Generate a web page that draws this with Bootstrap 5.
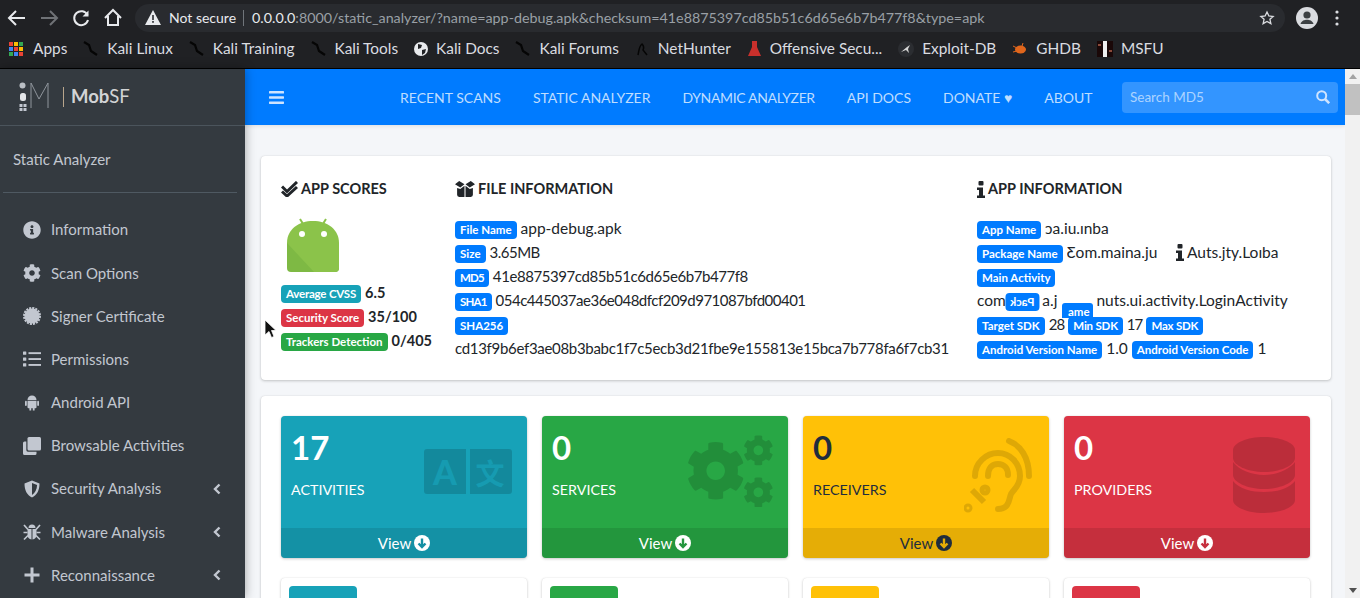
<!DOCTYPE html>
<html lang="en">
  <head>
    <meta charset="UTF-8" />
    <title>MobSF Static Analyzer</title>
    <link href="https://cdn.jsdelivr.net/npm/bootstrap@5.3.2/dist/css/bootstrap.min.css" rel="stylesheet" />
    <style>
      html, body { height: 598px; overflow: hidden; }
      body { font-family: "Lato", "Liberation Sans", sans-serif; font-size: 15px; color: #212529; background: #f4f6f9; }

      /* browser chrome */
      .chrome-bar { height: 35px; background: #202124; color: #e8eaed; padding-left: 5px; }
      .nav-glyph { width: 24px; height: 24px; margin-right: 8px; flex: none; }
      .url-pill { height: 28px; background: #292b2f; border-radius: 14px; margin-left: 2px; width: 1150px; font-size: 14px; color: #9aa0a6; padding: 0 10px; white-space: nowrap; flex: none; }
      .url-pill .addr { font-size: 14.3px; }
      .url-pill b { font-weight: 400; color: #e8eaed; }
      .url-state { color: #e8eaed; }
      .url-sep { width: 1px; height: 16px; background: #70757a; margin: 0 8px 0 7px; }
      .star-ico { margin-left: auto; }
      .avatar-ico { margin-left: 11px; }
      .bookmarks { height: 34px; background: #202124; border-bottom: 1px solid #000; color: #dadce0; font-size: 15.4px; padding: 0 0 5px 9px; gap: 16px; white-space: nowrap; }
      .bookmarks > span { gap: 8px; }
      .apps-word { margin-left: 2px; }

      /* app frame */
      .app-frame { height: 529px; }
      .side-panel { width: 245px; flex: none; background: #343a40; color: #c2c7d0; box-shadow: 0 0 10px rgba(0,0,0,.35); z-index: 2; }
      .brand-row { height: 57px; border-bottom: 1px solid #4b545c; padding-left: 19px; color: rgba(255,255,255,.8); font-size: 18.5px; }
      .brand-sep { width: 1px; height: 20px; background: #b8a58c; margin: 0 7px 0 10px; }
      .side-title { height: 66px; padding-left: 13px; font-size: 15px; }
      .side-rule { height: 1px; background: #4f5962; margin: 0 8px 0 3px; }
      .side-list { padding: 15px 0 0 23px; margin: 0; list-style: none; }
      .side-list li { height: 43.2px; font-size: 15px; padding-right: 24px; }
      .side-list svg.lead-ico { width: 18px; height: 18px; margin-right: 10px; fill: #c2c7d0; flex: none; }

      .work-area { min-width: 0; }
      .top-nav { height: 56px; background: #007bff; padding: 0 7px 0 24px; color: rgba(255,255,255,.75); font-size: 14px; white-space: nowrap; box-shadow: 0 1px 4px rgba(0,0,0,.1); }
      .top-links { gap: 32px; margin-left: 116px; }
      .tight-link { letter-spacing: -.35px; }
      .search-box { width: 216px; height: 31px; background: #3395ff; border-radius: 4px; margin-left: auto; font-size: 13.5px; padding: 0 8px; color: rgba(255,255,255,.6); }

      .scroll-body { padding: 31px 14px 0 16px; overflow: hidden; height: 473px; }
      .scroll-track { width: 15px; flex: none; background: #f1f1f1; position: relative; }
      .scroll-thumb { height: 31px; margin-top: 15px; background: #c1c1c1; }
      .scroll-arrow { width: 0; height: 0; border-left: 4px solid transparent; border-right: 4px solid transparent; position: absolute; left: 4px; }

      .panel-card { background: #fff; border-radius: 4px; box-shadow: 0 0 1px rgba(0,0,0,.125), 0 1px 3px rgba(0,0,0,.2); }
      .info-card { height: 224px; padding: 20px; margin-bottom: 16px; }
      .info-head { font-size: 14.5px; font-weight: 700; height: 26px; margin-bottom: 15px; white-space: nowrap; }
      .info-head svg { width: 17px; height: 16px; margin-right: 3px; fill: #212529; }
      .col-scores { width: 174px; flex: none; }
      .col-file { width: 522px; flex: none; }
      .col-app { position: relative; flex: 1; min-width: 0; }
      .data-line { height: 24px; white-space: nowrap; font-size: 15.5px; line-height: 22px; }
      .mini-tag { font-size: 11.5px; font-weight: 700; padding: 3px 5px; border-radius: 4px; color: #fff; display: inline-block; line-height: 12px; vertical-align: 0; }
      .tag-tight { letter-spacing: -.8px; }
      .tag-snug { letter-spacing: -.2px; }
      .num-tight { font-size: 15px; letter-spacing: -.9px; }
      .size-val { font-size: 15px; letter-spacing: -.5px; }
      .hash-md5 { font-size: 15px; letter-spacing: -.43px; }
      .hash-sha1 { font-size: 15px; letter-spacing: -.5px; }
      .hash-sha256 { font-size: 15px; letter-spacing: -.31px; }
      .tag-blue { background: #007bff; }
      .tag-cyan { background: #17a2b8; }
      .tag-red { background: #dc3545; }
      .tag-green { background: #28a745; }
      .score-val { font-weight: 700; font-size: 14.5px; }
      .droid-logo { width: 52px; height: 56px; margin: 0 0 8px 6px; display: block; }
      .flip-tag { transform: scaleX(-1); margin: 0 3px 0 -1px; }
      .ghost-tag { position: absolute; left: 85px; top: 127px; width: 31px; height: 15px; background: #007bff; color: #fff; font-size: 11.5px; font-weight: 700; border-radius: 3px 3px 0 0; padding: 3px 0 0 6px; line-height: 12px; }
      .clip-text { display: inline-block; width: 92px; overflow: hidden; vertical-align: top; }
      .gap-hole { display: inline-block; width: 39px; }
      .stray-i { width: 8px; height: 17px; margin-left: 17px; vertical-align: -3px; fill: #212529; }

      .tiles-card { padding: 20px 21px 20px 20px; height: 300px; }
      .tile-row { --bs-gutter-x: 15px; --bs-gutter-y: 20px; }
      .stat-tile { height: 142px; border-radius: 4px; position: relative; color: #fff; box-shadow: 0 0 1px rgba(0,0,0,.125), 0 1px 3px rgba(0,0,0,.2); overflow: hidden; }
      .tile-main { height: 112px; padding: 11px 10px; }
      .tile-num { font-size: 33px; font-weight: 700; line-height: 40px; margin: 0 0 11px; }
      .tile-name { font-size: 14.3px; line-height: 24px; }
      .tile-foot { height: 30px; background: rgba(0,0,0,.1); gap: 3px; font-size: 15px; }
      .tile-foot svg { width: 16px; height: 16px; }
      .tile-art { position: absolute; right: 15px; fill: rgba(0,0,0,.15); }
      .fill-cyan { background: #17a2b8; }
      .fill-green { background: #28a745; }
      .fill-amber { background: #ffc107; color: #1f2d3d; }
      .fill-red { background: #dc3545; }
      .small-tile { height: 80px; padding: 8px; }
      .small-square { width: 68px; height: 68px; border-radius: 4px; }
      .mouse-ptr { position: absolute; left: 264px; top: 319px; width: 13px; height: 20px; z-index: 5; }
    </style>
  </head>
  <body>
    <!-- shared icon shapes -->
    <svg width="0" height="0" class="position-absolute">
      <defs>
        <path id="cog-shape" d="M487.4 315.7l-42.6-24.6c4.3-23.2 4.3-47 0-70.2l42.6-24.6c4.9-2.8 7.1-8.6 5.5-14-11.1-35.6-30-67.8-54.7-94.6-3.8-4.1-10-5.1-14.8-2.3L380.8 110c-17.9-15.4-38.5-27.3-60.8-35.1V25.8c0-5.6-3.9-10.5-9.4-11.7-36.7-8.2-74.3-7.8-109.2 0-5.5 1.2-9.4 6.1-9.4 11.7V75c-22.2 7.9-42.8 19.8-60.8 35.1L88.7 85.5c-4.9-2.8-11-1.9-14.8 2.3-24.7 26.7-43.6 58.9-54.7 94.6-1.7 5.4.6 11.2 5.5 14L67.3 221c-4.3 23.2-4.3 47 0 70.2l-42.6 24.6c-4.9 2.8-7.1 8.6-5.5 14 11.1 35.6 30 67.8 54.7 94.6 3.8 4.1 10 5.1 14.8 2.3l42.6-24.6c17.9 15.4 38.5 27.3 60.8 35.1v49.2c0 5.6 3.9 10.5 9.4 11.7 36.7 8.2 74.3 7.8 109.2 0 5.5-1.2 9.4-6.1 9.4-11.7v-49.2c22.2-7.9 42.8-19.8 60.8-35.1l42.6 24.6c4.9 2.8 11 1.9 14.8-2.3 24.7-26.7 43.6-58.9 54.7-94.6 1.5-5.5-.7-11.3-5.6-14.1zM256 336c-44.1 0-80-35.9-80-80s35.9-80 80-80 80 35.9 80 80-35.9 80-80 80z"/>
        <path id="dragon-shape" d="M1 1l5 3 2 6 6 4" fill="none" stroke="#050505" stroke-width="2.200"/>
        <path id="caret-shape" d="M6.500 1.500L2 6l4.500 4.500" fill="none" stroke="#c2c7d0" stroke-width="2.400"/>
        <g id="info-i-shape"><rect x="1.500" width="5" height="4.500" rx="1"/><path d="M0 6.500h6v8h2V17H0v-2.500h2v-5.500H0z"/></g>
        <g id="down-shape"><circle cx="8" cy="8" r="8" fill="currentColor"/></g>
      </defs>
    </svg>

    <!-- browser toolbar -->
    <div class="chrome-bar d-flex align-items-center">
      <svg class="nav-glyph" viewBox="0 0 24 24" fill="none" stroke="#e8eaed" stroke-width="2"><path d="M20 12H5M11 5l-7 7 7 7"/></svg>
      <svg class="nav-glyph" viewBox="0 0 24 24" fill="none" stroke="#6f7276" stroke-width="2"><path d="M4 12h15M13 5l7 7-7 7"/></svg>
      <svg class="nav-glyph" viewBox="0 0 24 24" fill="none" stroke="#e8eaed" stroke-width="2"><path d="M18.500 9A7 7 0 1 0 19 14"/><path d="M19.500 4.500v6h-6" fill="#e8eaed" stroke="none"/></svg>
      <svg class="nav-glyph" viewBox="0 0 24 24" fill="none" stroke="#e8eaed" stroke-width="2"><path d="M4 12l8-8 8 8M7 10v9h10v-9"/></svg>
      <div class="url-pill d-flex align-items-center">
        <svg width="16" height="15" viewBox="0 0 16 15" class="me-2"><path d="M8 0l8 15H0z" fill="#e8eaed"/><rect x="7.200" y="5" width="1.600" height="5" fill="#292b2f"/><rect x="7.200" y="11" width="1.600" height="1.800" fill="#292b2f"/></svg>
        <span class="url-state">Not secure</span><span class="url-sep"></span>
        <span class="addr"><b>0.0.0.0</b>:8000/static_analyzer/?name=app-debug.apk&amp;checksum=41e8875397cd85b51c6d65e6b7b477f8&amp;type=apk</span>
        <svg class="star-ico" width="16" height="16" viewBox="0 0 24 24" fill="none" stroke="#dadce0" stroke-width="2"><path d="M12 3l2.800 6 6.400.7-4.800 4.300 1.400 6.400L12 17.100l-5.800 3.300 1.400-6.400L2.800 9.700 9.200 9z"/></svg>
      </div>
      <svg class="avatar-ico" width="22" height="22" viewBox="0 0 22 22"><circle cx="11" cy="11" r="11" fill="#dadce0"/><circle cx="11" cy="8" r="3.600" fill="#3c4043"/><path d="M4.500 17c1-3.500 4-4.300 6.500-4.300s5.500.8 6.500 4.300z" fill="#3c4043"/></svg>
      <svg class="ms-3" width="6" height="16" viewBox="0 0 6 16" fill="#dadce0"><circle cx="3" cy="2" r="1.600"/><circle cx="3" cy="8" r="1.600"/><circle cx="3" cy="14" r="1.600"/></svg>
    </div>

    <!-- bookmarks bar -->
    <div class="bookmarks d-flex align-items-center">
      <span class="d-flex align-items-center">
        <svg width="14" height="14" viewBox="0 0 14 14"><rect width="4" height="4" fill="#ea4335"/><rect x="5" width="4" height="4" fill="#fbbc04"/><rect x="10" width="4" height="4" fill="#34a853"/><rect y="5" width="4" height="4" fill="#4285f4"/><rect x="5" y="5" width="4" height="4" fill="#ea4335"/><rect x="10" y="5" width="4" height="4" fill="#fbbc04"/><rect y="10" width="4" height="4" fill="#34a853"/><rect x="5" y="10" width="4" height="4" fill="#4285f4"/><rect x="10" y="10" width="4" height="4" fill="#ea4335"/></svg>
        <span class="apps-word">Apps</span></span>
      <span class="d-flex align-items-center"><svg width="16" height="16" viewBox="0 0 16 16"><use href="#dragon-shape"/></svg>Kali Linux</span>
      <span class="d-flex align-items-center"><svg width="16" height="16" viewBox="0 0 16 16"><use href="#dragon-shape"/></svg>Kali Training</span>
      <span class="d-flex align-items-center"><svg width="16" height="16" viewBox="0 0 16 16"><use href="#dragon-shape"/></svg>Kali Tools</span>
      <span class="d-flex align-items-center"><svg width="14" height="14" viewBox="0 0 14 14"><circle cx="7" cy="7" r="7" fill="#e8eaed"/><path d="M4 2l4 1-1 3-3 1zM8 8l4-1-1 4-3 2z" fill="#202124"/></svg>Kali Docs</span>
      <span class="d-flex align-items-center"><svg width="16" height="16" viewBox="0 0 16 16"><use href="#dragon-shape"/></svg>Kali Forums</span>
      <span class="d-flex align-items-center"><svg width="15" height="15" viewBox="0 0 15 15" fill="none" stroke="#050505" stroke-width="1.500"><path d="M3 14c1-4 1-9 4-11 2 2 2 4 1 6l4 5"/></svg>NetHunter</span>
      <span class="d-flex align-items-center"><svg width="15" height="16" viewBox="0 0 15 16"><path d="M5 0h5v6l4 9H1l4-9z" fill="#c9302c"/></svg>Offensive Secu...</span>
      <span class="d-flex align-items-center"><svg width="16" height="16" viewBox="0 0 16 16"><circle cx="8" cy="8" r="8" fill="#2b2d31"/><path d="M3 11l6-5 3-2-2 4 1 4-3-3z" fill="#d5d5d5"/></svg>Exploit-DB</span>
      <span class="d-flex align-items-center"><svg width="16" height="16" viewBox="0 0 16 16"><ellipse cx="8.500" cy="8.500" rx="5.500" ry="4" fill="#e0661c"/><path d="M1 5l4 2M1 11l4-1M11 2l-1 3" stroke="#e0661c"/></svg>GHDB</span>
      <span class="d-flex align-items-center"><svg width="16" height="16" viewBox="0 0 16 16"><rect width="16" height="16" fill="#1a0808"/><rect x="6" y="0" width="4" height="16" fill="#eee"/><rect x="1" y="3" width="3" height="2" fill="#8a4a3a"/><rect x="12" y="9" width="3" height="2" fill="#8a4a3a"/></svg>MSFU</span>
    </div>

    <div class="app-frame d-flex">
      <aside class="side-panel">
        <div class="brand-row d-flex align-items-center">
          <svg width="34" height="30" viewBox="0 0 34 30" fill="none"><circle cx="3.500" cy="3.500" r="3" fill="#b9bec4"/><rect x="1" y="11" width="6" height="8" rx="2.500" fill="#e3e5e8"/><path d="M.5 22h3v3h-3zM4.500 22h3v3h-3zM.5 26h3v3h-3zM4.500 26h3v3h-3z" fill="#c2c7d0"/><path d="M12 26V1l8 16 9-16v25" stroke="#8f959c"/></svg>
          <span class="brand-sep"></span>
          <span><b>Mob</b>SF</span>
        </div>
        <div class="side-title d-flex align-items-center">Static Analyzer</div>
        <div class="side-rule"></div>
        <ul class="side-list">
          <li class="d-flex align-items-center">
            <svg class="lead-ico" viewBox="0 0 512 512"><path d="M256 8C119.043 8 8 119.083 8 256c0 136.997 111.043 248 248 248s248-111.003 248-248C504 119.083 392.957 8 256 8zm0 110c23.196 0 42 18.804 42 42s-18.804 42-42 42-42-18.804-42-42 18.804-42 42-42zm56 254c0 6.627-5.373 12-12 12h-88c-6.627 0-12-5.373-12-12v-24c0-6.627 5.373-12 12-12h12v-64h-12c-6.627 0-12-5.373-12-12v-24c0-6.627 5.373-12 12-12h64c6.627 0 12 5.373 12 12v100h12c6.627 0 12 5.373 12 12v24z"/></svg>Information</li>
          <li class="d-flex align-items-center">
            <svg class="lead-ico" viewBox="0 0 512 512"><use href="#cog-shape"/></svg>Scan Options</li>
          <li class="d-flex align-items-center">
            <svg class="lead-ico" viewBox="0 0 18 18"><circle cx="9" cy="9" r="7.600"/><circle cx="9" cy="9" r="8" fill="none" stroke="#c2c7d0" stroke-width="2" stroke-dasharray="2.100 1.040"/></svg>Signer Certificate</li>
          <li class="d-flex align-items-center">
            <svg class="lead-ico" viewBox="0 0 18 18"><rect y="1.500" width="3.300" height="3.300" rx=".5"/><rect y="7.400" width="3.300" height="3.300" rx=".5"/><rect y="13.300" width="3.300" height="3.300" rx=".5"/><rect x="5.500" y="2.200" width="12.500" height="1.900"/><rect x="5.500" y="8.100" width="12.500" height="1.900"/><rect x="5.500" y="14" width="12.500" height="1.900"/></svg>Permissions</li>
          <li class="d-flex align-items-center">
            <svg class="lead-ico" viewBox="0 0 18 18"><path d="M4.500 7a4.500 4.500 0 0 1 9 0zM4.500 7.800h9v6.400a1 1 0 0 1-1 1h-.9v2.300h-1.800v-2.300H8.200v2.300H6.400v-2.300h-.9a1 1 0 0 1-1-1z"/><rect x="2" y="7.800" width="1.800" height="5.200" rx=".9"/><rect x="14.200" y="7.800" width="1.800" height="5.200" rx=".9"/></svg>Android API</li>
          <li class="d-flex align-items-center">
            <svg class="lead-ico" viewBox="0 0 18 18"><rect x="4.500" y="0" width="13.500" height="13.500" rx="1.500"/><path d="M3.300 4.500H1.500A1.500 1.500 0 0 0 0 6v10.500A1.500 1.500 0 0 0 1.500 18H12a1.500 1.500 0 0 0 1.500-1.500v-1.800H5a1.700 1.700 0 0 1-1.700-1.700z"/></svg>Browsable Activities</li>
          <li class="d-flex align-items-center">
            <svg class="lead-ico" viewBox="0 0 18 18"><path fill-rule="evenodd" d="M9 .5l7.500 3c0 7-2.500 11.500-7.500 14-5-2.500-7.500-7-7.500-14zM9 3v12c3-1.800 4.900-5 5.100-9.900z"/></svg>Security Analysis
            <svg class="ms-auto" width="8" height="12" viewBox="0 0 8 12"><use href="#caret-shape"/></svg></li>
          <li class="d-flex align-items-center">
            <svg class="lead-ico" viewBox="0 0 18 18"><path d="M5.500 5a3.500 3.500 0 0 1 7 0zM4.500 6h4v10.500c-2.500-.3-4-2-4-4.500zM9.500 6h4v6c0 2.500-1.500 4.200-4 4.500z"/><path d="M1 2l4 4.500M17 2l-4 4.500M.5 9.500h4M17.500 9.500h-4M1 16.500l4-4M17 16.500l-4-4" stroke="#c2c7d0" stroke-width="1.700"/></svg>Malware Analysis
            <svg class="ms-auto" width="8" height="12" viewBox="0 0 8 12"><use href="#caret-shape"/></svg></li>
          <li class="d-flex align-items-center">
            <svg class="lead-ico" viewBox="0 0 18 18"><path d="M7.500 1.500h3v6h6v3h-6v6h-3v-6h-6v-3h6z"/></svg>Reconnaissance
            <svg class="ms-auto" width="8" height="12" viewBox="0 0 8 12"><use href="#caret-shape"/></svg></li>
        </ul>
      </aside>

      <div class="work-area flex-grow-1 d-flex">
        <div class="flex-grow-1 d-flex flex-column">
          <nav class="top-nav d-flex align-items-center">
            <svg width="15" height="13" viewBox="0 0 15 13" fill="#cfe4ff"><rect width="15" height="2.500" rx=".6"/><rect y="5.200" width="15" height="2.500" rx=".6"/><rect y="10.400" width="15" height="2.500" rx=".6"/></svg>
            <div class="top-links d-flex">
              <span>RECENT SCANS</span><span>STATIC ANALYZER</span><span class="tight-link">DYNAMIC ANALYZER</span><span>API DOCS</span><span>DONATE ♥</span><span>ABOUT</span>
            </div>
            <div class="search-box d-flex align-items-center justify-content-between">Search MD5
              <svg width="14" height="14" viewBox="0 0 14 14" fill="none" stroke="#cfe4ff" stroke-width="2"><circle cx="5.700" cy="5.700" r="4.500"/><path d="M9 9l4.200 4.200" stroke-width="2.500"/></svg>
            </div>
          </nav>

          <div class="scroll-body">
            <div class="panel-card info-card d-flex">
              <div class="col-scores">
                <div class="info-head d-flex align-items-center">
                  <svg viewBox="0 0 17 16"><path d="M1 5.500L6 10.500 16 1" fill="none" stroke="#212529" stroke-width="3"/><path d="M1 10.500L6 15 16 6" fill="none" stroke="#212529" stroke-width="3"/></svg>APP SCORES
                </div>
                <svg class="droid-logo" viewBox="0 0 52 56">
                  <path d="M13 2l5 8M39 2l-5 8" stroke="#8bc34a" stroke-width="2" fill="none"/>
                  <path d="M0 26C0 12 12 4 26 4s26 8 26 22z" fill="#8bc34a"/>
                  <path d="M0 26h52v25a4 4 0 0 1-4 4H4a4 4 0 0 1-4-4z" fill="#7eb944"/>
                  <path d="M0 26h52v25a4 4 0 0 1-4 4H27z" fill="#8bc34a"/>
                  <circle cx="15" cy="17" r="3" fill="#fff"/><circle cx="37" cy="17" r="3" fill="#fff"/>
                </svg>
                <div class="data-line"><span class="mini-tag tag-cyan tag-snug">Average CVSS</span> <span class="score-val">6.5</span></div>
                <div class="data-line"><span class="mini-tag tag-red">Security Score</span> <span class="score-val">35/100</span></div>
                <div class="data-line"><span class="mini-tag tag-green">Trackers Detection</span> <span class="score-val">0/405</span></div>
              </div>

              <div class="col-file">
                <div class="info-head d-flex align-items-center">
                  <svg viewBox="0 0 19 15" style="width:20px"><path d="M0 3l4-3 5 3-4 3zM19 3l-4-3-5 3 4 3z"/><path d="M2 6.500l3 1 4-3v10.500H4a2 2 0 0 1-2-2zM17 6.500l-3 1-4-3v10.500h5a2 2 0 0 0 2-2z"/></svg>FILE INFORMATION
                </div>
                <div class="data-line"><span class="mini-tag tag-blue">File Name</span> app-debug.apk</div>
                <div class="data-line"><span class="mini-tag tag-blue">Size</span> <span class="size-val">3.65MB</span></div>
                <div class="data-line"><span class="mini-tag tag-blue tag-tight">MD5</span> <span class="hash-md5">41e8875397cd85b51c6d65e6b7b477f8</span></div>
                <div class="data-line"><span class="mini-tag tag-blue tag-tight">SHA1</span> <span class="hash-sha1">054c445037ae36e048dfcf209d971087bfd00401</span></div>
                <div class="data-line"><span class="mini-tag tag-blue">SHA256</span></div>
                <div class="data-line"><span class="hash-sha256">cd13f9b6ef3ae08b3babc1f7c5ecb3d21fbe9e155813e15bca7b778fa6f7cb31</span></div>
              </div>

              <div class="col-app">
                <div class="info-head d-flex align-items-center">
                  <svg viewBox="0 0 8 17" style="width:8px;height:17px"><use href="#info-i-shape"/></svg>APP INFORMATION
                </div>
                <div class="data-line"><span class="mini-tag tag-blue">App Name</span> ɔa.iu.ınba</div>
                <div class="data-line"><span class="mini-tag tag-blue">Package Name</span> <span class="clip-text">Ƹom.maina.ju</span><svg class="stray-i" viewBox="0 0 8 17"><use href="#info-i-shape"/></svg> Auts.jty.Loıba</div>
                <div class="data-line"><span class="mini-tag tag-blue">Main Activity</span></div>
                <div class="data-line">com<span class="mini-tag tag-blue flip-tag">Pack</span>a.j<span class="gap-hole"></span>nuts.ui.activity.LoginActivity</div>
                <div class="data-line"><span class="mini-tag tag-blue">Target SDK</span> <span class="num-tight">28</span> <span class="mini-tag tag-blue tag-snug">Min SDK</span> <span class="num-tight">17</span> <span class="mini-tag tag-blue tag-snug">Max SDK</span></div>
                <div class="data-line"><span class="mini-tag tag-blue">Android Version Name</span> 1.0 <span class="mini-tag tag-blue">Android Version Code</span> 1</div>
                <span class="ghost-tag">ame</span>
              </div>
            </div>

            <div class="panel-card tiles-card">
              <div class="row tile-row">
                <div class="col-3">
                  <div class="stat-tile fill-cyan d-flex flex-column">
                    <div class="tile-main"><div class="tile-num">17</div><div class="tile-name">ACTIVITIES</div></div>
                    <svg class="tile-art" style="top:33px" width="88" height="45" viewBox="0 0 88 45"><path d="M3 0h39v45H3a3 3 0 0 1-3-3V3a3 3 0 0 1 3-3zM46 0h39a3 3 0 0 1 3 3v39a3 3 0 0 1-3 3H46z"/><text x="21" y="36" text-anchor="middle" font-family="Lato, sans-serif" font-weight="900" font-size="34" fill="#17a2b8" opacity=".75">A</text><text x="66" y="36" text-anchor="middle" font-family="'Noto Sans CJK SC', sans-serif" font-weight="700" font-size="29" fill="#17a2b8" opacity=".75">文</text></svg>
                    <div class="tile-foot d-flex align-items-center justify-content-center">View
                      <svg viewBox="0 0 16 16"><circle cx="8" cy="8" r="8" fill="currentColor"/><path d="M8 3.500V12M4.500 8.500L8 12l3.500-3.500" fill="none" stroke="#148fa3" stroke-width="2.400"/></svg></div>
                  </div>
                </div>
                <div class="col-3">
                  <div class="stat-tile fill-green d-flex flex-column">
                    <div class="tile-main"><div class="tile-num">0</div><div class="tile-name">SERVICES</div></div>
                    <svg class="tile-art" style="top:19px" width="87" height="72" viewBox="0 0 87 72">
                      <use href="#cog-shape" transform="translate(0 6) scale(.116)"/>
                      <use href="#cog-shape" transform="translate(57 0) scale(.06)"/>
                      <use href="#cog-shape" transform="translate(57 42) scale(.06)"/>
                    </svg>
                    <div class="tile-foot d-flex align-items-center justify-content-center">View
                      <svg viewBox="0 0 16 16"><circle cx="8" cy="8" r="8" fill="currentColor"/><path d="M8 3.500V12M4.500 8.500L8 12l3.500-3.500" fill="none" stroke="#24963e" stroke-width="2.400"/></svg></div>
                  </div>
                </div>
                <div class="col-3">
                  <div class="stat-tile fill-amber d-flex flex-column">
                    <div class="tile-main"><div class="tile-num">0</div><div class="tile-name">RECEIVERS</div></div>
                    <svg class="tile-art" style="top:22px;fill:none;stroke:rgba(0,0,0,.13)" width="70" height="75" viewBox="0 0 70 75" stroke-width="6" stroke-linecap="round">
                      <path d="M45 3c11 4 20 16 20 35"/>
                      <path d="M11 38c0-13 11-23 23-23s22 10 22 23c0 10-6 13-9 18-2 4-1 15-13 15"/>
                      <path d="M24 38c0-8 4-12 10-12s10 4 10 11"/>
                      <circle cx="21" cy="52" r="2.500"/><path d="M8 52l12 12" stroke-linecap="butt"/><circle cx="4" cy="70" r="1.500"/>
                    </svg>
                    <div class="tile-foot d-flex align-items-center justify-content-center">View
                      <svg viewBox="0 0 16 16"><circle cx="8" cy="8" r="8" fill="currentColor"/><path d="M8 3.500V12M4.500 8.500L8 12l3.500-3.500" fill="none" stroke="#e5ad06" stroke-width="2.400"/></svg></div>
                  </div>
                </div>
                <div class="col-3">
                  <div class="stat-tile fill-red d-flex flex-column">
                    <div class="tile-main"><div class="tile-num">0</div><div class="tile-name">PROVIDERS</div></div>
                    <svg class="tile-art" style="top:21px" width="62" height="76" viewBox="0 0 62 76">
                      <path d="M0 13C0 6 14 0 31 0s31 6 31 13v8c0 7-14 14-31 14S0 28 0 21z"/>
                      <path d="M0 25c6 8 19 13 31 13s25-5 31-13v13c0 7-14 14-31 14S0 45 0 38z"/>
                      <path d="M0 44c6 8 19 11 31 11s25-3 31-11v19c0 7-14 13-31 13S0 70 0 63z"/>
                    </svg>
                    <div class="tile-foot d-flex align-items-center justify-content-center">View
                      <svg viewBox="0 0 16 16"><circle cx="8" cy="8" r="8" fill="currentColor"/><path d="M8 3.500V12M4.500 8.500L8 12l3.500-3.500" fill="none" stroke="#c62f3e" stroke-width="2.400"/></svg></div>
                  </div>
                </div>
                <div class="col-3"><div class="panel-card small-tile"><div class="small-square fill-cyan"></div></div></div>
                <div class="col-3"><div class="panel-card small-tile"><div class="small-square fill-green"></div></div></div>
                <div class="col-3"><div class="panel-card small-tile"><div class="small-square fill-amber"></div></div></div>
                <div class="col-3"><div class="panel-card small-tile"><div class="small-square fill-red"></div></div></div>
              </div>
            </div>
          </div>
        </div>
        <div class="scroll-track">
          <span class="scroll-arrow" style="top:5px;border-bottom:5px solid #a3a3a3"></span>
          <div class="scroll-thumb"></div>
          <span class="scroll-arrow" style="bottom:5px;border-top:5px solid #505050"></span>
        </div>
      </div>
    </div>

    <svg class="mouse-ptr" viewBox="0 0 13 20"><path d="M1 1v15l4-3.500 2.500 6 2.500-1-2.500-6H12z" fill="#111" stroke="#fff" stroke-width=".8"/></svg>
    <script src="https://cdn.jsdelivr.net/npm/bootstrap@5.3.2/dist/js/bootstrap.bundle.min.js"></script>
  </body>
</html>
